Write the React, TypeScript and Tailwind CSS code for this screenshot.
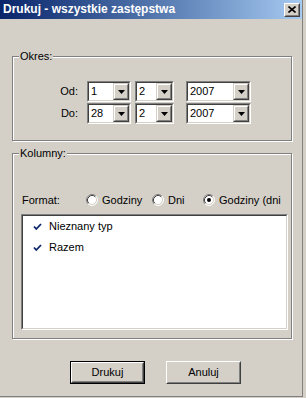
import React from "react";

const font = "font-['Liberation_Sans',Arial,sans-serif]";

function Arrow() {
  return (
    <svg width="7" height="4" viewBox="0 0 7 4" className="block">
      <path d="M0 0H7L3.5 4Z" fill="#000" />
    </svg>
  );
}

function Combo({ w, value }: { w: string; value: string }) {
  return (
    <div className={`${w} h-[21px] border border-t-[#808080] border-l-[#808080] border-b-white border-r-white`}>
      <div className="h-full w-full border border-t-[#404040] border-l-[#404040] border-b-[#d4d0c8] border-r-[#d4d0c8] bg-white flex">
        <div className="flex-1 pl-[2px] text-[11px] leading-[17px] text-black overflow-hidden">{value}</div>
        <div className="w-[16px] h-full border border-t-[#d4d0c8] border-l-[#d4d0c8] border-b-[#404040] border-r-[#404040]">
          <div className="h-full w-full border border-t-white border-l-white border-b-[#808080] border-r-[#808080] bg-[#d4d0c8] flex items-center justify-center">
            <Arrow />
          </div>
        </div>
      </div>
    </div>
  );
}

function Radio({ checked }: { checked?: boolean }) {
  return (
    <svg width="12" height="12" viewBox="0 0 12 12" className="block shrink-0">
      <circle cx="6" cy="6" r="5" fill="#fff" />
      <path d="M2.11 9.89A5.5 5.5 0 0 1 9.89 2.11" fill="none" stroke="#808080" strokeWidth="1" />
      <path d="M9.89 2.11A5.5 5.5 0 0 1 2.11 9.89" fill="none" stroke="#fff" strokeWidth="1" />
      <path d="M2.82 9.18A4.5 4.5 0 0 1 9.18 2.82" fill="none" stroke="#404040" strokeWidth="1" />
      <path d="M9.18 2.82A4.5 4.5 0 0 1 2.82 9.18" fill="none" stroke="#d4d0c8" strokeWidth="1" />
      {checked && <circle cx="6" cy="6" r="2" fill="#000" />}
    </svg>
  );
}

function Check() {
  return (
    <svg width="9" height="8" viewBox="0 0 9 8" className="block">
      <path d="M1 3.5L3.3 6L8 1" fill="none" stroke="#0a246a" strokeWidth="1.8" />
    </svg>
  );
}

function Button({ label, def }: { label: string; def?: boolean }) {
  const inner = (
    <div className="h-full w-full border border-t-white border-l-white border-b-[#404040] border-r-[#404040]">
      <div className="h-full w-full border border-t-[#d4d0c8] border-l-[#d4d0c8] border-b-[#808080] border-r-[#808080] flex items-center justify-center text-[11px] text-black">
        {label}
      </div>
    </div>
  );
  return def ? (
    <div className="w-[75px] h-[23px] border border-black">{inner}</div>
  ) : (
    <div className="w-[75px] h-[23px]">{inner}</div>
  );
}

function Group({ label, h, children }: { label: string; h: string; children: React.ReactNode }) {
  return (
    <div
      className={`relative ml-[12px] w-[280px] ${h} border border-[#808080] shadow-[inset_1px_1px_0_#fff,1px_1px_0_#fff]`}
    >
      <span className="absolute left-[6px] -top-[8px] px-[1px] bg-[#d4d0c8] text-[11px] leading-[14px] text-black">
        {label}
      </span>
      {children}
    </div>
  );
}

export default function App() {
  return (
    <div className={`w-[306px] h-[398px] bg-[#d4d0c8] ${font}`}>
      <div className="w-[303px] h-[397px] border-r border-b border-[#808080] flex flex-col">
        <div className="h-[19px] shrink-0 bg-gradient-to-r from-[#0a246a] to-[#a6caf0] flex items-center pl-[3px] pr-[2px]">
          <span className="flex-1 text-white font-bold text-[12px] leading-[19px] whitespace-nowrap">
            Drukuj - wszystkie zastępstwa
          </span>
          <div className="w-[16px] h-[14px] border border-t-white border-l-white border-b-[#404040] border-r-[#404040]">
            <div className="h-full w-full border border-t-[#d4d0c8] border-l-[#d4d0c8] border-b-[#808080] border-r-[#808080] bg-[#d4d0c8] flex items-center justify-center">
              <svg width="8" height="7" viewBox="0 0 8 7" className="block">
                <path d="M0.5 0.5L7.5 6.5M7.5 0.5L0.5 6.5" stroke="#000" strokeWidth="1.6" />
              </svg>
            </div>
          </div>
        </div>

        <div className="mt-[37px]">
          <Group label="Okres:" h="h-[85px]">
            <div className="pt-[24px] flex flex-col gap-[1px]">
              {[
                ["Od:", "1", "2", "2007"],
                ["Do:", "28", "2", "2007"],
              ].map((r) => (
                <div key={r[0]} className="flex items-center">
                  <span className="w-[65px] text-right text-[11px] text-black">{r[0]}</span>
                  <span className="w-[9px]" />
                  <Combo w="w-[44px]" value={r[1]} />
                  <span className="w-[4px]" />
                  <Combo w="w-[39px]" value={r[2]} />
                  <span className="w-[12px]" />
                  <Combo w="w-[65px]" value={r[3]} />
                </div>
              ))}
            </div>
          </Group>
        </div>

        <div className="mt-[12px]">
          <Group label="Kolumny:" h="h-[186px]">
            <div className="pt-[38px] pl-[8px]">
              <div className="h-[16px] flex items-center text-[11px] text-black">
                <span className="w-[65px] pl-[1px]">Format:</span>
                <div className="w-[66px] flex items-center gap-[4px]">
                  <Radio />
                  <span>Godziny</span>
                </div>
                <div className="w-[51px] flex items-center gap-[4px]">
                  <Radio />
                  <span>Dni</span>
                </div>
                <div className="w-[78px] flex items-center gap-[4px] whitespace-nowrap">
                  <Radio checked />
                  <span>Godziny (dni</span>
                </div>
              </div>
              <div className="mt-[6px] w-[267px] h-[116px] border border-t-[#808080] border-l-[#808080] border-b-white border-r-white">
                <div className="h-full w-full border border-t-[#404040] border-l-[#404040] border-b-[#d4d0c8] border-r-[#d4d0c8] bg-white">
                  {["Nieznany typ", "Razem"].map((t) => (
                    <div key={t} className="h-[21px] flex items-center text-[11px] text-black">
                      <span className="w-[10px]" />
                      <Check />
                      <span className="w-[7px]" />
                      <span>{t}</span>
                    </div>
                  ))}
                </div>
              </div>
            </div>
          </Group>
        </div>

        <div className="mt-[22px] flex pl-[70px] gap-[21px]">
          <Button label="Drukuj" def />
          <Button label="Anuluj" />
        </div>
      </div>
    </div>
  );
}
